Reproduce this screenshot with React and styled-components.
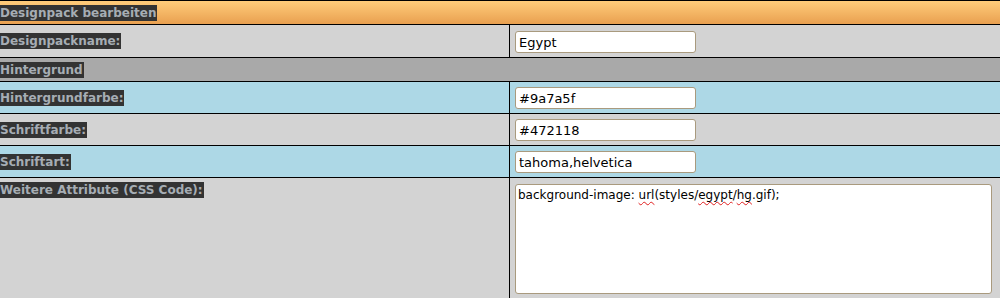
import React from 'react'
import styled, { createGlobalStyle } from 'styled-components'

const Global = createGlobalStyle`
  body {
    margin: 0;
    background: #d3d3d3;
    font-family: "DejaVu Sans", Verdana, sans-serif;
  }
`

const Form = styled.div`
  width: 1000px;
  border-top: 1px solid #000;
`

const bg = {
  gray: '#d3d3d3',
  dark: '#a9a9a9',
  blue: '#add8e6',
}

const HeadRow = styled.div`
  height: 23px;
  display: flex;
  align-items: center;
  border-bottom: 1px solid #000;
  background: ${(p) => (p.$section ? bg.dark : 'linear-gradient(#ffcc7a, #e9a050)')};
`

const Row = styled.div`
  display: grid;
  grid-template-columns: 510px 1fr;
  border-bottom: 1px solid #000;
  background: ${(p) => bg[p.$tone]};
  min-height: 31px;
`

const LabelCell = styled.div`
  border-right: 1px solid #000;
  display: flex;
  align-items: ${(p) => (p.$top ? 'flex-start' : 'center')};
  padding-top: ${(p) => (p.$top ? '4px' : '0')};
`

const Label = styled.span`
  background: #333;
  color: #a6adb4;
  font-weight: bold;
  font-size: 12px;
  line-height: 16px;
  padding: 0 1px 0 0;
`

const FieldCell = styled.div`
  padding: 5px 5px 4px 5px;
  display: flex;
  align-items: flex-start;
`

const Input = styled.input`
  width: 181px;
  height: 22px;
  box-sizing: border-box;
  border: 1px solid #a99a7e;
  border-radius: 3px;
  background: #fff;
  font-family: "DejaVu Sans", Verdana, sans-serif;
  font-size: 13px;
  color: #000;
  padding: 0 3px;
  outline: none;
`

const Area = styled.div`
  width: 477px;
  height: 110px;
  box-sizing: border-box;
  margin-top: 1px;
  border: 1px solid #a99a7e;
  border-radius: 3px;
  background: #fff;
  font-size: 12px;
  line-height: 16px;
  color: #000;
  padding: 2px 2px;
  white-space: pre-wrap;
`

const Typo = styled.span`
  text-decoration: underline wavy #e02020;
  text-decoration-thickness: 1px;
  text-underline-offset: 2px;
`

const fields = [
  { tone: 'blue', label: 'Hintergrundfarbe:', value: '#9a7a5f' },
  { tone: 'gray', label: 'Schriftfarbe:', value: '#472118' },
  { tone: 'blue', label: 'Schriftart:', value: 'tahoma,helvetica' },
]

export default function App() {
  return (
    <>
      <Global />
      <Form>
        <HeadRow>
          <Label>Designpack bearbeiten</Label>
        </HeadRow>
        <Row $tone="gray" style={{ minHeight: 32 }}>
          <LabelCell>
            <Label>Designpackname:</Label>
          </LabelCell>
          <FieldCell style={{ paddingTop: 6 }}>
            <Input defaultValue="Egypt" />
          </FieldCell>
        </Row>
        <HeadRow $section>
          <Label>Hintergrund</Label>
        </HeadRow>
        {fields.map((f) => (
          <Row key={f.label} $tone={f.tone}>
            <LabelCell>
              <Label>{f.label}</Label>
            </LabelCell>
            <FieldCell>
              <Input defaultValue={f.value} />
            </FieldCell>
          </Row>
        ))}
        <Row $tone="gray">
          <LabelCell $top>
            <Label>Weitere Attribute (CSS Code):</Label>
          </LabelCell>
          <FieldCell>
            <Area>
              background-image: <Typo>url</Typo>(styles/<Typo>egypt</Typo>/<Typo>hg</Typo>.gif);
            </Area>
          </FieldCell>
        </Row>
      </Form>
    </>
  )
}
